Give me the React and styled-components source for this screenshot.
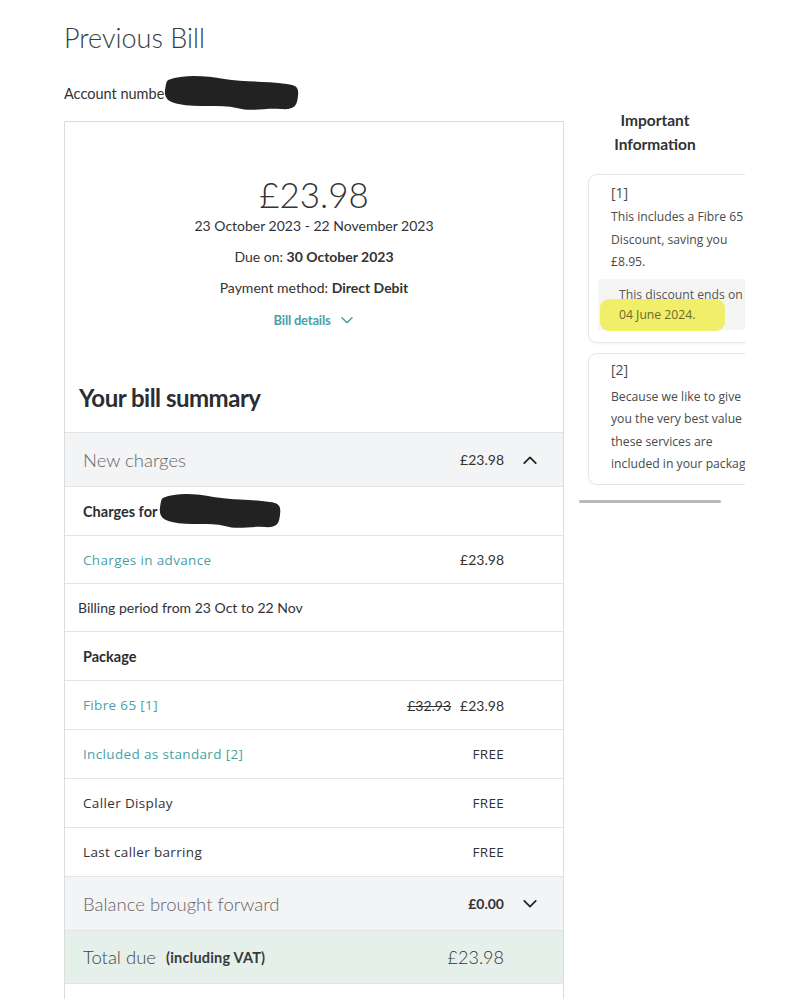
import React from 'react'
import styled, { createGlobalStyle } from 'styled-components'

const GlobalStyle = createGlobalStyle`
    body {
        margin: 0;
        background: #fff;
        font-family: "Lato", "Liberation Sans", sans-serif;
        color: #2f3236;
    }
`;

const TEAL = '#4a9fa6';

const Page = styled.div`
    display: flex;
    align-items: flex-start;
    gap: 15px;
    padding: 20px 0 0 64px;
    width: 793px;
    box-sizing: border-box;
    height: 999px;
    overflow: hidden;
`;

const LeftCol = styled.div`
    width: 500px;
    flex-shrink: 0;
`;

const Title = styled.h1`
    margin: 0;
    font-size: 27px;
    font-weight: 300;
    color: #3a3d40;
    line-height: 36px;
`;

const AccountLine = styled.div`
    display: flex;
    align-items: center;
    margin-top: 20px;
    height: 34px;
    font-size: 14.5px;
    color: #333;
`;

const Blob = styled.svg`
    display: block;
    flex-shrink: 0;
`;

const Card = styled.div`
    margin-top: 11px;
    border: 1px solid #dcdcdc;
    border-bottom: none;
    background: #fff;
`;

const Summary = styled.div`
    display: flex;
    flex-direction: column;
    align-items: center;
    padding: 51px 0 0;
    color: #333;
`;

const BigAmount = styled.div`
    font-size: 35px;
    font-weight: 300;
    line-height: 42px;
`;

const InfoLine = styled.div`
    font-size: 14px;
    line-height: 18px;
    margin-top: ${p => p.$gap}px;
    b { font-weight: 700; }
`;

const DetailsLink = styled.div`
    display: flex;
    align-items: center;
    gap: 10px;
    margin-top: 15px;
    color: ${TEAL};
    font-size: 13px;
    font-weight: 700;
    letter-spacing: -0.2px;
`;

const SectionTitle = styled.h2`
    margin: 55px 0 0;
    padding: 0 0 0 14px;
    font-size: 24px;
    font-weight: 700;
    letter-spacing: -0.5px;
    line-height: 30px;
    height: 49px;
    color: #2b2e31;
`;

const Row = styled.div`
    display: flex;
    align-items: center;
    height: ${p => p.$h || 49}px;
    box-sizing: border-box;
    border-top: 1px solid #e4e4e4;
    padding: 0 25px 0 ${p => p.$pad || 18}px;
    background: ${p => p.$bg || '#fff'};
`;

const Label = styled.div`
    flex: 1;
    display: flex;
    align-items: center;
    gap: ${p => p.$gap || 10}px;
    font-family: ${p => p.$plain ? '"Lato", sans-serif' : '"Open Sans", "Liberation Sans", sans-serif'};
    font-size: ${p => p.$size || 13.5}px;
    font-weight: ${p => p.$weight || 400};
    letter-spacing: ${p => p.$plain ? 0 : 0.35}px;
    color: ${p => p.$color || '#333'};
`;

const Amounts = styled.div`
    display: flex;
    gap: 9px;
    font-size: ${p => p.$size || 14}px;
    font-weight: ${p => p.$weight || 400};
    color: #333;
    text-align: right;
`;

const Struck = styled.span`
    text-decoration: line-through;
`;

const Free = styled.span`
    font-family: "Open Sans", "Liberation Sans", sans-serif;
    font-size: 13.5px;
    letter-spacing: 0.3px;
`;

const ChevronSlot = styled.div`
    width: 34px;
    display: flex;
    justify-content: flex-end;
`;

const Small = styled.span`
    font-size: 14.5px;
    font-weight: 700;
    color: #3a3a3a;
    letter-spacing: 0.2px;
`;

const RightCol = styled.div`
    width: 166px;
    flex-shrink: 0;
    margin-top: 88px;
    font-family: "Open Sans", "Liberation Sans", sans-serif;
`;

const InfoHeading = styled.h3`
    margin: 0;
    width: 152px;
    text-align: center;
    font-family: "Lato", sans-serif;
    font-size: 15.5px;
    font-weight: 700;
    line-height: 24px;
    color: #2f3236;
`;

const Scroller = styled.div`
    margin-top: 18px;
    overflow: hidden;
    padding-left: 9px;
`;

const NoteStack = styled.div`
    display: flex;
    flex-direction: column;
    gap: 10px;
    width: 185px;
`;

const Note = styled.div`
    border: 1px solid #e6e6e6;
    border-radius: 9px;
    box-shadow: 0 1px 3px rgba(0, 0, 0, 0.05);
    padding: ${p => p.$top || 8}px 11px ${p => p.$bottom || 12}px 22px;
    font-size: 12.2px;
    line-height: 22.5px;
    color: #4a4a4a;
`;

const NoteRef = styled.div`
    font-size: 14px;
    line-height: 20px;
    margin-bottom: ${p => p.$space || 3}px;
`;

const NoteAside = styled.div`
    margin: 5px -11px 0 -13px;
    padding: 6px 0 5px 21px;
    background: #f5f5f3;
    font-size: 12.2px;
    line-height: 20px;
    color: #555;
`;

const Highlight = styled.span`
    background: #f1ee6a;
    border-radius: 9px;
    margin-left: -19px;
    padding: 7px 30px 8px 19px;
    color: #6c6a2a;
`;

const Track = styled.div`
    margin-top: 15px;
    width: 142px;
    height: 3px;
    background: #b9b9b9;
    border-radius: 2px;
`;

function Chevron({ up, color = '#222', size = 16 }) {
    return (
        <svg width={size} height={size * 0.6} viewBox="0 0 16 10" fill="none">
            <polyline
                points={up ? '2,8.5 8,2.5 14,8.5' : '2,2 8,8 14,2'}
                stroke={color}
                strokeWidth="1.8"
                strokeLinecap="round"
                strokeLinejoin="round"
            />
        </svg>
    );
}

// scribbled-out personal details
function Redacted({ w, h }) {
    return (
        <Blob width={w} height={h} viewBox="0 0 130 38" preserveAspectRatio="none">
            <path
                d="M4 6 C20 0 40 2 58 5 C76 8 96 7 118 10 C128 11 130 14 129 22 C128 32 126 36 112 35 C96 34 84 38 70 34 C54 30 32 34 14 30 C4 28 0 24 1 16 C2 10 2 8 4 6 Z"
                fill="#222"
            />
        </Blob>
    );
}

function App() {
    return (
        <>
            <GlobalStyle />
            <Page>
                <LeftCol>
                    <Title>Previous Bill</Title>
                    <AccountLine>
                        Account numbe
                        <Redacted w={135} h={38} />
                    </AccountLine>

                    <Card>
                        <Summary>
                            <BigAmount>£23.98</BigAmount>
                            <InfoLine $gap={2}>23 October 2023 - 22 November 2023</InfoLine>
                            <InfoLine $gap={13}>Due on: <b>30 October 2023</b></InfoLine>
                            <InfoLine $gap={13}>Payment method: <b>Direct Debit</b></InfoLine>
                            <DetailsLink>
                                Bill details <Chevron color={TEAL} size={14} />
                            </DetailsLink>
                        </Summary>

                        <SectionTitle>Your bill summary</SectionTitle>

                        <Row $h={54} $bg="#f3f4f5">
                            <Label $plain $size={18.5} $weight={300} $color="#666">New charges</Label>
                            <Amounts>£23.98</Amounts>
                            <ChevronSlot><Chevron up /></ChevronSlot>
                        </Row>
                        <Row>
                            <Label $plain $size={14.5} $weight={700} $color="#2b2e31" $gap={2}>
                                <span>Charges for</span>
                                <Redacted w={122} h={38} />
                            </Label>
                        </Row>
                        <Row $h={48}>
                            <Label $color={TEAL}>Charges in advance</Label>
                            <Amounts>£23.98</Amounts>
                            <ChevronSlot />
                        </Row>
                        <Row $h={48} $pad={13}>
                            <Label $plain $size={14} $color="#2f3236">Billing period from 23 Oct to 22 Nov</Label>
                        </Row>
                        <Row>
                            <Label $plain $size={14.5} $weight={700} $color="#2b2e31">Package</Label>
                        </Row>
                        <Row>
                            <Label $color={TEAL}>Fibre 65 [1]</Label>
                            <Amounts><Struck>£32.93</Struck><span>£23.98</span></Amounts>
                            <ChevronSlot />
                        </Row>
                        <Row>
                            <Label $color={TEAL}>Included as standard [2]</Label>
                            <Amounts><Free>FREE</Free></Amounts>
                            <ChevronSlot />
                        </Row>
                        <Row>
                            <Label>Caller Display</Label>
                            <Amounts><Free>FREE</Free></Amounts>
                            <ChevronSlot />
                        </Row>
                        <Row>
                            <Label>Last caller barring</Label>
                            <Amounts><Free>FREE</Free></Amounts>
                            <ChevronSlot />
                        </Row>
                        <Row $h={54} $bg="#f3f4f5">
                            <Label $plain $size={18.5} $weight={300} $color="#666">Balance brought forward</Label>
                            <Amounts $weight={700}>£0.00</Amounts>
                            <ChevronSlot><Chevron /></ChevronSlot>
                        </Row>
                        <Row $h={53} $bg="#e5f0ea">
                            <Label $plain $size={18.5} $weight={300} $color="#444">
                                Total due <Small>(including VAT)</Small>
                            </Label>
                            <Amounts $size={18} $weight={300}>£23.98</Amounts>
                            <ChevronSlot />
                        </Row>
                        <Row $h={30} />
                    </Card>
                </LeftCol>

                <RightCol>
                    <InfoHeading>Important<br />Information</InfoHeading>
                    <Scroller>
                        <NoteStack>
                            <Note>
                                <NoteRef>[1]</NoteRef>
                                This includes a Fibre 65 Discount, saving you £8.95.
                                <NoteAside>
                                    This discount ends on<br />
                                    <Highlight>04 June 2024.</Highlight>
                                </NoteAside>
                            </Note>
                            <Note $top={6} $bottom={8}>
                                <NoteRef $space={6}>[2]</NoteRef>
                                Because we like to give you the very best value these services are included in your package.
                            </Note>
                        </NoteStack>
                    </Scroller>
                    <Track />
                </RightCol>
            </Page>
        </>
    );
}

export default App
